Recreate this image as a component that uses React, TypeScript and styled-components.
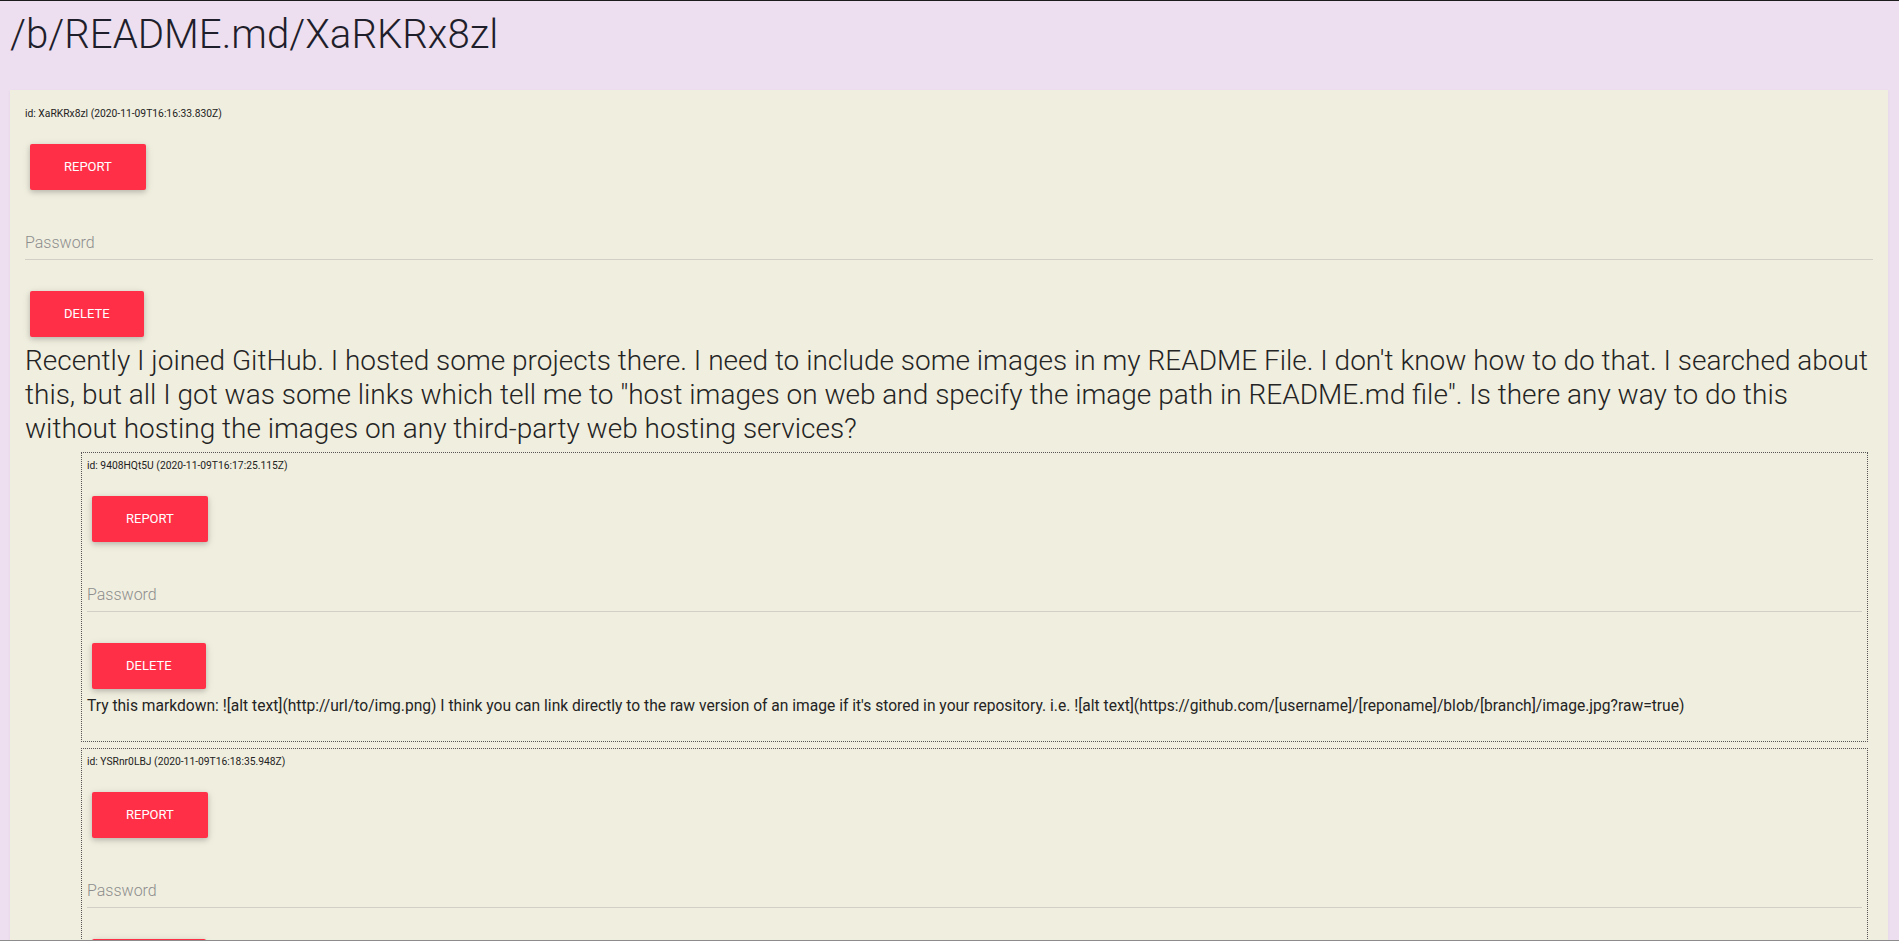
import React from 'react';
import styled, { createGlobalStyle } from 'styled-components';

const GlobalStyle = createGlobalStyle`
  html, body {
    margin: 0;
    padding: 0;
    overflow: hidden;
  }
  body {
    background: #eedff0;
    font-family: Roboto, 'Liberation Sans', sans-serif;
    color: #222;
  }
`;

const Page = styled.div`
  min-height: 100vh;
  box-sizing: border-box;
  padding: 10px 11px 0 10px;
`;

// window edge lines seen on top and bottom of the shot
const Frame = styled.div`
  position: fixed;
  inset: 0;
  pointer-events: none;
  border-top: 1px solid #1c1c1c;
  border-bottom: 1px solid #8c8c8c;
`;

const Title = styled.h1`
  margin: 0 0 30px;
  font-size: 40.2px;
  font-weight: 300;
  line-height: 50px;
  color: #1f1e2b;
`;

const Card = styled.div`
  background: #f0eedf;
  padding: 16px 15px 15px;
  box-shadow: 0 1px 3px rgba(0, 0, 0, 0.05);
`;

const Meta = styled.div`
  font-size: 10.3px;
  line-height: 16px;
`;

const Button = styled.button<{ $gap: number }>`
  display: block;
  height: 46px;
  padding: 0 34px;
  margin: ${({ $gap }) => $gap}px 0 0 5px;
  border: none;
  border-radius: 2px;
  background: #ff2f48;
  color: #fff;
  font: 400 13px/46px Roboto, 'Liberation Sans', sans-serif;
  text-transform: uppercase;
  box-shadow: 0 2px 5px rgba(0, 0, 0, 0.16), 0 2px 10px rgba(0, 0, 0, 0.1);
  cursor: pointer;
`;

const PasswordInput = styled.input`
  display: block;
  width: 100%;
  box-sizing: border-box;
  height: 34px;
  margin: 36px 0 0;
  padding: 0;
  border: none;
  border-bottom: 1px solid #d2d0c6;
  background: transparent;
  outline: none;
  font: 300 16px Roboto, 'Liberation Sans', sans-serif;
  color: #222;

  &::placeholder {
    color: #8d8d8d;
  }
`;

const Text = styled.div<{ $small?: boolean }>`
  margin-top: 7px;
  font-weight: ${({ $small }) => ($small ? 400 : 300)};
  font-size: ${({ $small }) => ($small ? 15.6 : 28)}px;
  line-height: ${({ $small }) => ($small ? 21 : 34)}px;
  color: #242424;
`;

const Reply = styled.div`
  margin: 6px 5px 0 56px;
  padding: 5px 5px 24px;
  border: 1px dotted #555;
`;

type Entry = { id: string; date: string; text: string };

const post: Entry = {
  id: 'XaRKRx8zl',
  date: '2020-11-09T16:16:33.830Z',
  text:
    'Recently I joined GitHub. I hosted some projects there. I need to include some images in my README File. I don\'t know how to do that. I searched about this, but all I got was some links which tell me to "host images on web and specify the image path in README.md file". Is there any way to do this without hosting the images on any third-party web hosting services?',
};

const replies: Entry[] = [
  {
    id: '9408HQt5U',
    date: '2020-11-09T16:17:25.115Z',
    text:
      "Try this markdown: ![alt text](http://url/to/img.png) I think you can link directly to the raw version of an image if it's stored in your repository. i.e. ![alt text](https://github.com/[username]/[reponame]/blob/[branch]/image.jpg?raw=true)",
  },
  {
    id: 'YSRnr0LBJ',
    date: '2020-11-09T16:18:35.948Z',
    text: '',
  },
];

const Controls = ({ entry }: { entry: Entry }) => (
  <>
    <Meta>
      id: {entry.id} ({entry.date})
    </Meta>
    <Button $gap={22}>Report</Button>
    <PasswordInput type="password" placeholder="Password" />
    <Button $gap={31}>Delete</Button>
  </>
);

export default function App() {
  return (
    <>
      <GlobalStyle />
      <Page>
        <Title>/b/README.md/{post.id}</Title>
        <Card>
          <Controls entry={post} />
          <Text>{post.text}</Text>
          {replies.map((r) => (
            <Reply key={r.id}>
              <Controls entry={r} />
              <Text $small>{r.text}</Text>
            </Reply>
          ))}
        </Card>
      </Page>
      <Frame />
    </>
  );
}
